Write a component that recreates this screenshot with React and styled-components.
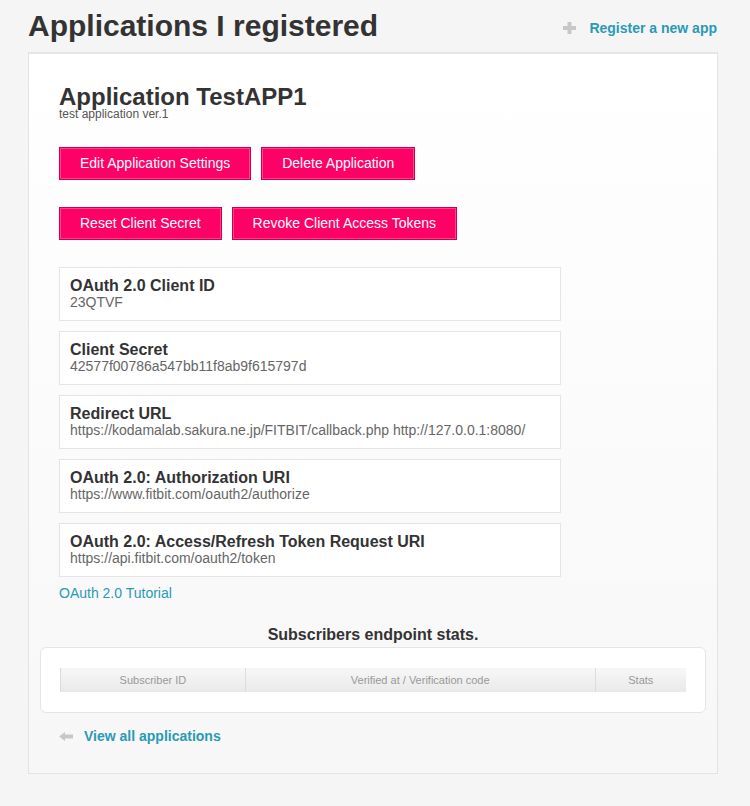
import React from "react";
import styled, { createGlobalStyle } from "styled-components";

const GlobalStyle = createGlobalStyle`
  html, body { margin: 0; padding: 0; }
  body {
    background: #f5f5f5;
    font-family: "Liberation Sans", Arial, sans-serif;
    color: #333;
  }
  * { box-sizing: border-box; }
`;

const Page = styled.div`
  width: 690px;
  margin-left: 28px;
  padding-top: 8px;
  padding-bottom: 32px;
`;

const Header = styled.header`
  display: flex;
  justify-content: space-between;
  align-items: center;
  margin-bottom: 8px;
`;

const PageTitle = styled.h1`
  margin: 0;
  font-size: 30px;
  line-height: 36px;
  font-weight: bold;
  color: #333;
`;

const IconLink = styled.a`
  display: flex;
  align-items: center;
  gap: ${(p) => p.$gap || 12}px;
  font-size: 14px;
  line-height: 16px;
  font-weight: bold;
  color: #2a9ab6;
  text-decoration: none;
  margin-top: ${(p) => p.$offset || 0}px;
  margin-right: ${(p) => p.$right || 0}px;
`;

const Panel = styled.main`
  border: 1px solid #e3e3e3;
  border-top: 2px solid #e6e6e6;
  background: linear-gradient(#ffffff 0%, #f7f7f7 100%);
  padding: 32px 11px 29px;
`;

const Section = styled.section`
  padding: 0 19px;
`;

const AppTitle = styled.h2`
  margin: 0;
  font-size: 24px;
  line-height: 22px;
  font-weight: bold;
  color: #333;
`;

const AppSub = styled.p`
  margin: 0;
  font-size: 12px;
  line-height: 12px;
  color: #555;
`;

const ButtonRow = styled.div`
  display: flex;
  gap: 10px;
  margin-top: ${(p) => p.$top}px;
`;

const PinkButton = styled.button`
  font-family: "Liberation Sans", Arial, sans-serif;
  font-size: 14px;
  line-height: 17px;
  color: #fff;
  background: #ff0066;
  border: 1px solid #c90050;
  box-shadow: inset 0 0 0 1px rgba(255, 140, 185, 0.45);
  padding: 7px 20px;
  height: 33px;
  cursor: pointer;
`;

const InfoList = styled.div`
  display: flex;
  flex-direction: column;
  gap: 10px;
  margin-top: 27px;
`;

const InfoBox = styled.div`
  width: 502px;
  background: #fff;
  border: 1px solid #e5e5e5;
  padding: 9px 10px 10px;
`;

const InfoLabel = styled.div`
  font-size: 16px;
  line-height: 17px;
  font-weight: bold;
  color: #333;
`;

const InfoValue = styled.div`
  font-size: 14px;
  line-height: 16px;
  color: #666;
`;

const TextLink = styled.a`
  display: block;
  margin-top: 8px;
  font-size: 14px;
  line-height: 16px;
  color: #2a9ab6;
  text-decoration: none;
`;

const StatsTitle = styled.h3`
  margin: 24px 0 0;
  text-align: center;
  font-size: 16px;
  line-height: 20px;
  font-weight: bold;
  color: #333;
`;

const StatsBox = styled.div`
  margin-top: 2px;
  background: #fff;
  border: 1px solid #e5e5e5;
  border-radius: 6px;
  padding: 20px 19px 20px;
`;

const Table = styled.table`
  width: 100%;
  border-collapse: collapse;
`;

const Th = styled.th`
  width: ${(p) => p.$w}px;
  height: 24px;
  padding: 0;
  font-size: 11px;
  font-weight: normal;
  color: #999;
  text-align: center;
  background: linear-gradient(#f7f7f7, #e9e9e9);
  border-left: 1px solid #dcdcdc;
`;

const BackRow = styled.div`
  padding: 0 19px;
  margin-top: 15px;
`;

const PlusIcon = () => (
  <svg width="13" height="12" viewBox="0 0 13 12" aria-hidden="true">
    <rect x="4.5" y="0" width="4" height="12" fill="#c8c8c8" />
    <rect x="0" y="4" width="13" height="4" fill="#c8c8c8" />
  </svg>
);

const ArrowLeftIcon = () => (
  <svg width="14" height="9" viewBox="0 0 14 9" aria-hidden="true">
    <polygon points="0,4.5 6,0 6,2.5 14,2.5 14,6.5 6,6.5 6,9" fill="#c8c8c8" />
  </svg>
);

const fields = [
  ["OAuth 2.0 Client ID", "23QTVF"],
  ["Client Secret", "42577f00786a547bb11f8ab9f615797d"],
  ["Redirect URL", "https://kodamalab.sakura.ne.jp/FITBIT/callback.php http://127.0.0.1:8080/"],
  ["OAuth 2.0: Authorization URI", "https://www.fitbit.com/oauth2/authorize"],
  ["OAuth 2.0: Access/Refresh Token Request URI", "https://api.fitbit.com/oauth2/token"],
];

export default function App() {
  return (
    <>
      <GlobalStyle />
      <Page>
        <Header>
          <PageTitle>Applications I registered</PageTitle>
          <IconLink href="#" $offset={4} $right={1} $gap={13}>
            <PlusIcon />
            Register a new app
          </IconLink>
        </Header>
        <Panel>
          <Section>
            <AppTitle>Application TestAPP1</AppTitle>
            <AppSub>test application ver.1</AppSub>
            <ButtonRow $top={27}>
              <PinkButton>Edit Application Settings</PinkButton>
              <PinkButton>Delete Application</PinkButton>
            </ButtonRow>
            <ButtonRow $top={27}>
              <PinkButton>Reset Client Secret</PinkButton>
              <PinkButton>Revoke Client Access Tokens</PinkButton>
            </ButtonRow>
            <InfoList>
              {fields.map(([label, value]) => (
                <InfoBox key={label}>
                  <InfoLabel>{label}</InfoLabel>
                  <InfoValue>{value}</InfoValue>
                </InfoBox>
              ))}
            </InfoList>
            <TextLink href="#">OAuth 2.0 Tutorial</TextLink>
          </Section>
          <StatsTitle>Subscribers endpoint stats.</StatsTitle>
          <StatsBox>
            <Table>
              <thead>
                <tr>
                  <Th $w={185}>Subscriber ID</Th>
                  <Th $w={350}>Verified at / Verification code</Th>
                  <Th $w={91}>Stats</Th>
                </tr>
              </thead>
            </Table>
          </StatsBox>
          <BackRow>
            <IconLink href="#" $gap={11}>
              <ArrowLeftIcon />
              View all applications
            </IconLink>
          </BackRow>
        </Panel>
      </Page>
    </>
  );
}
